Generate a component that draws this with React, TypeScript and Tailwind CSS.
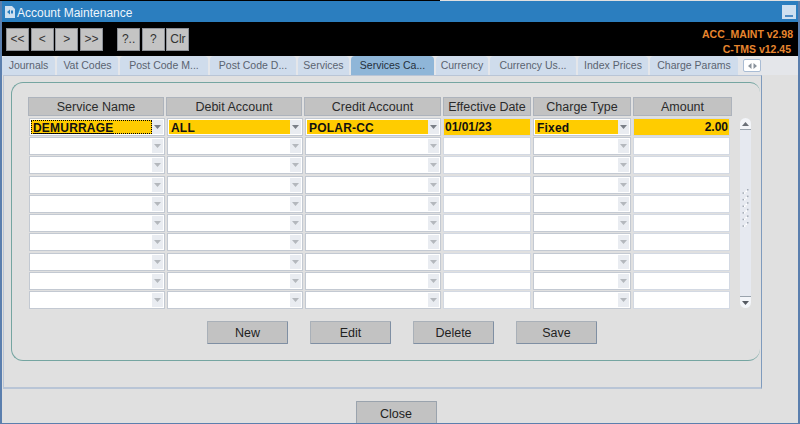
const tabs = [
	{ label: 'Journals', w: 'w-[53px]' },
	{ label: 'Vat Codes', w: 'w-[61px]' },
	{ label: 'Post Code M...', w: 'w-[88px]' },
	{ label: 'Post Code D...', w: 'w-[86px]' },
	{ label: 'Services', w: 'w-[51px]' },
	{ label: 'Services Ca...', w: 'w-[83px]', active: true },
	{ label: 'Currency', w: 'w-[52px]' },
	{ label: 'Currency Us...', w: 'w-[86px]' },
	{ label: 'Index Prices', w: 'w-[70px]' },
	{ label: 'Charge Params', w: 'w-[88px]' },
];

const columns = [
	{ label: 'Service Name', w: 'w-[136px]', cellW: 'w-[136px]', combo: true },
	{ label: 'Debit Account', w: 'w-[136px]', cellW: 'w-[136px]', combo: true },
	{ label: 'Credit Account', w: 'w-[137px]', cellW: 'w-[136px]', combo: true },
	{ label: 'Effective Date', w: 'w-[88px]', cellW: 'w-[88px]' },
	{ label: 'Charge Type', w: 'w-[98px]', cellW: 'w-[98px]', combo: true },
	{ label: 'Amount', w: 'w-[99px]', cellW: 'w-[97px]', right: true },
];

const firstRow = ['DEMURRAGE', 'ALL', 'POLAR-CC', '01/01/23', 'Fixed', '2.00'];
const emptyRows = [1, 2, 3, 4, 5, 6, 7, 8, 9];

const Caret = ({ faded }: { faded?: boolean }) => (
	<svg width="7" height="4" viewBox="0 0 7 4" className="shrink-0">
		<path d="M0 0h7L3.5 4z" fill={faded ? '#b4b8bd' : '#7a7f87'} />
	</svg>
);

const NavButton = ({ label }: { label: string }) => (
	<div className="flex h-[23px] w-[23px] items-center justify-center border border-[#8d9198] bg-[#c4c4c4] text-[12px] text-[#333]">
		{label}
	</div>
);

const ActionButton = ({ label }: { label: string }) => (
	<div className="flex h-[23px] w-[81px] items-center justify-center rounded-[1px] border border-[#a9b0b8] border-b-[#7f8fa3] border-r-[#7f8fa3] bg-[#c2c2c2] pt-[2px] text-[12.5px] text-[#222]">
		{label}
	</div>
);

const Cell = ({ column, value }: { column: (typeof columns)[number]; value?: string }) => {
	const filled = value !== undefined;
	if (column.combo) {
		return (
			<div className={`${column.cellW} flex h-[18px] shrink-0 border border-[#c3c9d2] bg-white p-px`}>
				<div
					className={`flex min-w-0 flex-1 items-center pl-[2px] pt-px text-[12px] font-bold tracking-[0.2px] text-[#111] ${filled ? 'bg-[#ffcc00]' : 'bg-white'} ${value === 'DEMURRAGE' ? 'underline outline-1 -outline-offset-1 outline-dotted outline-black' : ''}`}
				>
					{value}
				</div>
				<div className="flex w-[11px] shrink-0 items-center justify-center bg-[#e9ecf1]">
					<Caret faded={!filled} />
				</div>
			</div>
		);
	}
	return (
		<div className={`${column.cellW} h-[18px] shrink-0 border border-[#d3d9e3] bg-white`}>
			<div
				className={`flex h-[16px] items-center px-[1px] text-[12px] font-bold text-[#111] ${column.right ? 'justify-end' : ''} ${filled ? 'bg-[#ffcc00]' : 'bg-white'}`}
			>
				{value}
			</div>
		</div>
	);
};

const Scrollbar = () => (
	<div className="ml-[10px] flex h-[190px] w-[11px] shrink-0 flex-col">
		<div className="flex h-[12px] items-center justify-center rounded-t-full border-b border-[#9aa3ad] bg-[#f3f5f9]">
			<svg width="7" height="4" viewBox="0 0 7 4">
				<path d="M0 4h7L3.5 0z" fill="#6b7078" />
			</svg>
		</div>
		<div className="flex flex-1 flex-col items-center justify-center bg-[#e6e9f0] pb-[6px]">
			<svg width="7" height="42" viewBox="0 0 7 42">
				{[0, 1, 2, 3, 4, 5].map((dot) => (
					<g key={dot}>
						<rect x="5" y={dot * 6.6} width="1.5" height="1.5" fill="#a4abb5" />
						<rect x="0.5" y={dot * 6.6 + 3.3} width="1.5" height="1.5" fill="#a4abb5" />
						<rect x="3.5" y={dot * 6.6 + 1.5} width="1.5" height="1.5" fill="#ffffff" />
						<rect x="2" y={dot * 6.6 + 3.3} width="1.5" height="1.5" fill="#ffffff" />
					</g>
				))}
			</svg>
		</div>
		<div className="flex h-[12px] items-center justify-center rounded-b-full border-t border-[#9aa3ad] bg-[#f3f5f9]">
			<svg width="7" height="4" viewBox="0 0 7 4">
				<path d="M0 0h7L3.5 4z" fill="#555a62" />
			</svg>
		</div>
	</div>
);

export default function App() {
	return (
		<div className="h-[424px] w-[800px] overflow-hidden bg-[#e0e0e0] font-['Liberation_Sans',Arial,sans-serif]">
			<div className="h-px w-[440px] bg-black" />
			<div className="flex h-[423px] flex-col border-b border-l-2 border-r-2 border-[#5b7fae]">
				<div className="flex h-[21px] shrink-0 items-center bg-[#2b7ebf] pl-[3px] pr-[2px] text-white">
					<svg width="11" height="14" viewBox="0 0 11 14" className="shrink-0">
						<path d="M0 1h7l3 3v9H0z" fill="#cfe0f0" />
						<path d="M2 7l3-2.5v5zM6 5.5h2v3H6z" fill="#2b7ebf" />
					</svg>
					<span className="ml-px pt-[2px] text-[12px] text-[#eef5fb]">Account Maintenance</span>
					<div className="ml-auto flex h-[14px] w-[14px] items-end justify-center bg-[#cfe0f0] pb-[2px]">
						<div className="h-[2px] w-[8px] bg-[#4f8cc4]" />
					</div>
				</div>

				<div className="flex h-[34px] shrink-0 items-center bg-black px-[4px]">
					<div className="flex gap-[1.7px]">
						<NavButton label="<<" />
						<NavButton label="<" />
						<NavButton label=">" />
						<NavButton label=">>" />
					</div>
					<div className="ml-[14px] flex gap-[1.7px]">
						<NavButton label="?.." />
						<NavButton label="?" />
						<NavButton label="Clr" />
					</div>
					<div className="ml-auto pr-px pt-[6px] text-right text-[10.5px] font-bold leading-[15px] text-[#e8862e]">
						<p>ACC_MAINT v2.98</p>
						<p className="pr-[2px]">C-TMS v12.45</p>
					</div>
				</div>

				<div className="flex h-[19px] shrink-0 items-end gap-[2px] bg-[#e4e6ea]">
					{tabs.map((tab) => (
						<div
							key={tab.label}
							className={`${tab.w} flex h-[19px] shrink-0 items-center justify-center whitespace-nowrap rounded-t-[4px] text-[10.5px] ${tab.active ? 'bg-[#8fb6d8] text-[#24303c]' : 'bg-[#cfdcec] text-[#5a6370]'}`}
						>
							{tab.label}
						</div>
					))}
					<div className="mb-[3px] ml-[3px] flex h-[13px] w-[18px] items-center justify-center rounded-[2px] border border-[#a9bcd4] bg-white">
						<svg width="9" height="6" viewBox="0 0 9 6">
							<path d="M0 3l3.5-3v6zM5.5 0L9 3 5.5 6z" fill="#8a929c" />
						</svg>
					</div>
				</div>

				<div className="ml-px mr-[36px] flex h-[314px] shrink-0 flex-col border-b-2 border-l border-r border-t border-[#b9c5d6] border-r-[#7f9bbd]">
					<div className="ml-[7px] mr-px mt-[6px] flex h-[279px] shrink-0 flex-col rounded-[12px] rounded-tr-[10px] border border-r-0 border-[#75a5a1] pl-[16px] pt-[14px]">
						<div className="flex gap-[2px]">
							{columns.map((column) => (
								<div
									key={column.label}
									className={`${column.w} flex h-[19px] shrink-0 items-center justify-center border border-[#adb3bc] bg-[#c2c2c2] pt-[2px] text-[12.5px] text-[#2b2b2b]`}
								>
									{column.label}
								</div>
							))}
						</div>
						<div className="ml-px mt-[2px] flex">
							<div className="flex h-[191px] flex-col justify-between">
								<div className="flex gap-[2px]">
									{columns.map((column, index) => (
										<Cell key={column.label} column={column} value={firstRow[index]} />
									))}
								</div>
								{emptyRows.map((row) => (
									<div key={row} className="flex gap-[2px]">
										{columns.map((column) => (
											<Cell key={column.label} column={column} />
										))}
									</div>
								))}
							</div>
							<Scrollbar />
						</div>
						<div className="ml-[179px] mt-[12px] flex gap-[22px]">
							<ActionButton label="New" />
							<ActionButton label="Edit" />
							<ActionButton label="Delete" />
							<ActionButton label="Save" />
						</div>
					</div>
				</div>

				<div className="flex flex-1 items-end justify-center pr-[8px]">
					<div className="flex h-[22px] w-[81px] items-center justify-center rounded-t-[1px] border border-b-0 border-[#9aa3ad] bg-[#c2c2c2] pt-[3px] text-[12.5px] text-[#222]">
						Close
					</div>
				</div>
			</div>
		</div>
	);
}
